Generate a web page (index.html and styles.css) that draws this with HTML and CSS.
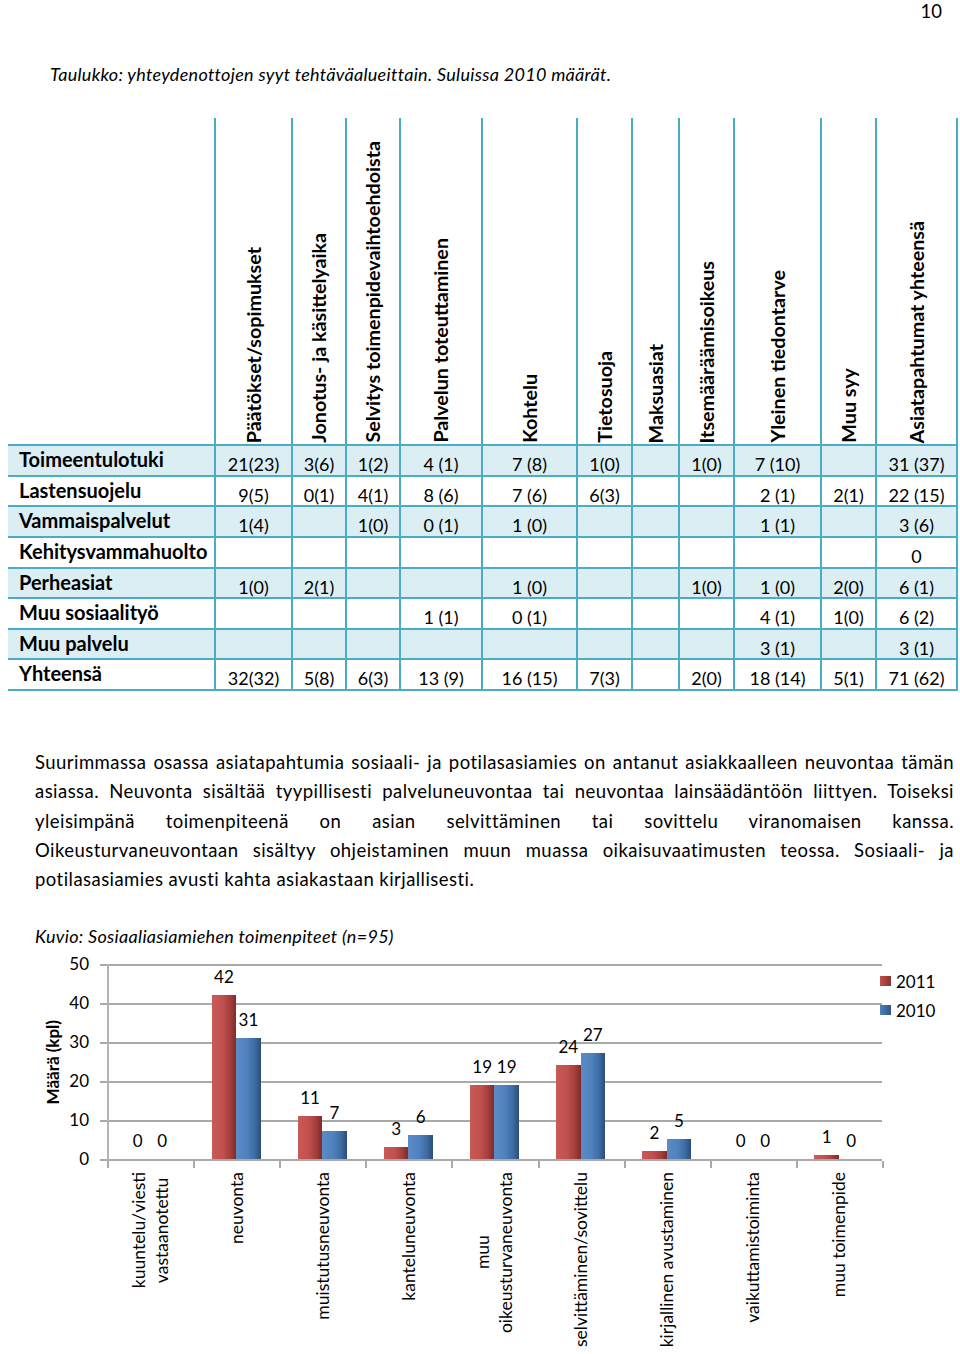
FILE: index.html
```html
<!DOCTYPE html>
<html lang="fi">
<head>
<meta charset="utf-8">
<title>Sivu 10</title>
<link rel="stylesheet" href="styles.css">
</head>
<body>
<div class="page">
  <div class="pagenum">10</div>
  <p class="caption">Taulukko: yhteydenottojen syyt tehtäväalueittain. Suluissa 2010 määrät.</p>

  <table class="stats">
    <colgroup>
      <col class="c0"><col class="c1"><col class="c2"><col class="c3"><col class="c4"><col class="c5">
      <col class="c6"><col class="c7"><col class="c8"><col class="c9"><col class="c10"><col class="c11">
    </colgroup>
    <thead>
      <tr>
        <th class="corner"></th>
        <th><span class="vh">Päätökset/sopimukset</span></th>
        <th><span class="vh">Jonotus- ja käsittelyaika</span></th>
        <th><span class="vh">Selvitys toimenpidevaihtoehdoista</span></th>
        <th><span class="vh">Palvelun toteuttaminen</span></th>
        <th><span class="vh">Kohtelu</span></th>
        <th><span class="vh">Tietosuoja</span></th>
        <th><span class="vh">Maksuasiat</span></th>
        <th><span class="vh">Itsemääräämisoikeus</span></th>
        <th><span class="vh">Yleinen tiedontarve</span></th>
        <th><span class="vh">Muu syy</span></th>
        <th><span class="vh">Asiatapahtumat yhteensä</span></th>
      </tr>
    </thead>
    <tbody>
      <tr><th>Toimeentulotuki</th><td>21(23)</td><td>3(6)</td><td>1(2)</td><td>4 (1)</td><td>7 (8)</td><td>1(0)</td><td></td><td>1(0)</td><td>7 (10)</td><td></td><td>31 (37)</td></tr>
      <tr><th>Lastensuojelu</th><td>9(5)</td><td>0(1)</td><td>4(1)</td><td>8 (6)</td><td>7 (6)</td><td>6(3)</td><td></td><td></td><td>2 (1)</td><td>2(1)</td><td>22 (15)</td></tr>
      <tr><th>Vammaispalvelut</th><td>1(4)</td><td></td><td>1(0)</td><td>0 (1)</td><td>1 (0)</td><td></td><td></td><td></td><td>1 (1)</td><td></td><td>3 (6)</td></tr>
      <tr><th>Kehitysvammahuolto</th><td></td><td></td><td></td><td></td><td></td><td></td><td></td><td></td><td></td><td></td><td>0</td></tr>
      <tr><th>Perheasiat</th><td>1(0)</td><td>2(1)</td><td></td><td></td><td>1 (0)</td><td></td><td></td><td>1(0)</td><td>1 (0)</td><td>2(0)</td><td>6 (1)</td></tr>
      <tr><th>Muu sosiaalityö</th><td></td><td></td><td></td><td>1 (1)</td><td>0 (1)</td><td></td><td></td><td></td><td>4 (1)</td><td>1(0)</td><td>6 (2)</td></tr>
      <tr><th>Muu palvelu</th><td></td><td></td><td></td><td></td><td></td><td></td><td></td><td></td><td>3 (1)</td><td></td><td>3 (1)</td></tr>
      <tr><th>Yhteensä</th><td>32(32)</td><td>5(8)</td><td>6(3)</td><td>13 (9)</td><td>16 (15)</td><td>7(3)</td><td></td><td>2(0)</td><td>18 (14)</td><td>5(1)</td><td>71 (62)</td></tr>
    </tbody>
  </table>

  <p class="text">
    <span class="jl">Suurimmassa osassa asiatapahtumia sosiaali- ja potilasasiamies on antanut asiakkaalleen neuvontaa tämän</span>
    <span class="jl">asiassa. Neuvonta sisältää tyypillisesti palveluneuvontaa tai neuvontaa lainsäädäntöön liittyen. Toiseksi</span>
    <span class="jl">yleisimpänä toimenpiteenä on asian selvittäminen tai sovittelu viranomaisen kanssa.</span>
    <span class="jl">Oikeusturvaneuvontaan sisältyy ohjeistaminen muun muassa oikaisuvaatimusten teossa. Sosiaali- ja</span>
    <span class="ll">potilasasiamies avusti kahta asiakastaan kirjallisesti.</span>
  </p>

  <p class="caption fig">Kuvio: Sosiaaliasiamiehen toimenpiteet (n=95)</p>

  <div class="chart">
    <div class="ytitle"><span>Määrä (kpl)</span></div>
    <div class="yticks"><span>50</span><span>40</span><span>30</span><span>20</span><span>10</span><span>0</span></div>
    <div class="plot">
      <div class="cat">
        <div class="bc"><span class="val">0</span><div class="bar red" style="height:0px"></div></div>
        <div class="bc"><span class="val">0</span><div class="bar blue" style="height:0px"></div></div>
      </div>
      <div class="cat">
        <div class="bc"><span class="val">42</span><div class="bar red" style="height:163.8px"></div></div>
        <div class="bc"><span class="val">31</span><div class="bar blue" style="height:120.9px"></div></div>
      </div>
      <div class="cat">
        <div class="bc"><span class="val">11</span><div class="bar red" style="height:42.9px"></div></div>
        <div class="bc"><span class="val">7</span><div class="bar blue" style="height:27.3px"></div></div>
      </div>
      <div class="cat">
        <div class="bc"><span class="val">3</span><div class="bar red" style="height:11.7px"></div></div>
        <div class="bc"><span class="val">6</span><div class="bar blue" style="height:23.4px"></div></div>
      </div>
      <div class="cat">
        <div class="bc"><span class="val">19</span><div class="bar red" style="height:74.1px"></div></div>
        <div class="bc"><span class="val">19</span><div class="bar blue" style="height:74.1px"></div></div>
      </div>
      <div class="cat">
        <div class="bc"><span class="val">24</span><div class="bar red" style="height:93.6px"></div></div>
        <div class="bc"><span class="val">27</span><div class="bar blue" style="height:105.3px"></div></div>
      </div>
      <div class="cat">
        <div class="bc"><span class="val">2</span><div class="bar red" style="height:7.8px"></div></div>
        <div class="bc"><span class="val">5</span><div class="bar blue" style="height:19.5px"></div></div>
      </div>
      <div class="cat">
        <div class="bc"><span class="val">0</span><div class="bar red" style="height:0px"></div></div>
        <div class="bc"><span class="val">0</span><div class="bar blue" style="height:0px"></div></div>
      </div>
      <div class="cat">
        <div class="bc"><span class="val">1</span><div class="bar red" style="height:3.9px"></div></div>
        <div class="bc"><span class="val">0</span><div class="bar blue" style="height:0px"></div></div>
      </div>
    </div>
    <div class="legend">
      <div class="li"><i class="sw red"></i><span>2011</span></div>
      <div class="li"><i class="sw blue"></i><span>2010</span></div>
    </div>
    <div class="xlabels">
      <div class="xl"><span>kuuntelu/viesti<br>vastaanotettu</span></div>
      <div class="xl"><span>neuvonta</span></div>
      <div class="xl"><span>muistutusneuvonta</span></div>
      <div class="xl"><span>kanteluneuvonta</span></div>
      <div class="xl"><span>muu<br>oikeusturvaneuvonta</span></div>
      <div class="xl"><span>selvittäminen/sovittelu</span></div>
      <div class="xl"><span>kirjallinen avustaminen</span></div>
      <div class="xl"><span>vaikuttamistoiminta</span></div>
      <div class="xl"><span>muu toimenpide</span></div>
    </div>
  </div>
</div>
</body>
</html>
```

FILE: styles.css
```css
* { box-sizing: border-box; }

body {
  margin: 0;
  background: #ffffff;
  color: #000000;
  font-family: Lato, "Open Sans", "DejaVu Sans", sans-serif;
}

.page {
  width: 960px;
  height: 1354px;
  overflow: hidden;
}

.pagenum {
  text-align: right;
  padding: 0 18px 0 0;
  font-size: 18.5px;
  line-height: 22.2px;
  height: 19px;
}

.caption {
  margin: 44px 0 0 50px;
  font-style: italic;
  font-size: 18px;
  letter-spacing: 0.3px;
  line-height: 22px;
}

/* ---------- table ---------- */
.stats {
  margin: 33px 0 0 8px;
  border-collapse: collapse;
  table-layout: fixed;
  width: 949px;
}
.c0 { width: 207px; }
.c1 { width: 77px; }
.c2 { width: 54px; }
.c3 { width: 54px; }
.c4 { width: 82px; }
.c5 { width: 95px; }
.c6 { width: 55px; }
.c7 { width: 47px; }
.c8 { width: 55px; }
.c9 { width: 87px; }
.c10 { width: 55px; }
.c11 { width: 81px; }

.stats th,
.stats td {
  border: 2px solid #4bacc6;
  padding: 0;
}

.stats thead th {
  border-top: none;
  height: 327px;
  vertical-align: bottom;
  text-align: center;
  font-size: 0;
  padding-bottom: 1px;
}
.stats thead th.corner { border-left: none; }

.vh {
  display: inline-block;
  vertical-align: bottom;
  writing-mode: vertical-rl;
  transform: rotate(180deg);
  white-space: nowrap;
  font-weight: 700;
  font-size: 19.7px;
  line-height: 20px;
}

.stats tbody tr:nth-child(odd) { background: #daeef3; }

.stats tbody th {
  border-left: none;
  text-align: left;
  vertical-align: top;
  padding: 3px 0 0 11px;
  font-size: 20px;
  line-height: 20px;
  font-weight: 700;
  height: 30.625px;
  white-space: nowrap;
}

.stats tbody td {
  text-align: center;
  vertical-align: top;
  padding-top: 8px;
  font-size: 18px;
  line-height: 20px;
  height: 30.625px;
  white-space: nowrap;
}

/* ---------- text ---------- */
.text {
  margin: 57px 6px 0 35px;
  font-size: 18.5px;
  letter-spacing: 0.45px;
  line-height: 29.33px;
}
.text span { display: block; }
.text .jl { text-align: justify; text-align-last: justify; }
.text .ll { text-align: left; }

.fig { margin: 30px 0 0 35px; }

/* ---------- chart ---------- */
.chart {
  margin-top: 17px;
  padding-left: 40px;
  display: grid;
  grid-template-columns: 26px 41px 775px 78px;
  grid-template-rows: 197px auto;
}

.ytitle {
  grid-column: 1;
  grid-row: 1;
  display: flex;
  justify-content: center;
  align-items: center;
}
.ytitle span {
  writing-mode: vertical-rl;
  transform: rotate(180deg);
  font-weight: 700;
  font-size: 17px;
  line-height: 20px;
  white-space: nowrap;
}

.yticks {
  grid-column: 2;
  grid-row: 1;
  align-self: start;
  margin-top: -10px;
  height: 215px;
  padding-right: 18px;
  display: flex;
  flex-direction: column;
  justify-content: space-between;
  align-items: flex-end;
  font-size: 17px;
  line-height: 20px;
}

.plot {
  grid-column: 3;
  grid-row: 1;
  margin-left: -7px;
  padding: 0 0 2px 7px;
  height: 197px;
  display: flex;
  background-image:
    linear-gradient(to right, transparent 7px, #b3b3b3 7px, #b3b3b3 9px, transparent 9px),
    repeating-linear-gradient(to bottom, #a9a9a9 0, #a9a9a9 2px, transparent 2px, transparent 39px);
}

.cat {
  flex: 1;
  display: flex;
  justify-content: center;
  align-items: flex-end;
}
.bc {
  width: 24.5px;
  display: flex;
  flex-direction: column;
  align-items: center;
}
.val {
  font-size: 17px;
  line-height: 20px;
  margin-bottom: 8px;
  white-space: nowrap;
}
.bar { width: 100%; }
.bar.red {
  background: linear-gradient(to right, #c85a57 0%, #c0504d 45%, #a43f3c 75%, #7e2b29 100%);
}
.bar.blue {
  background: linear-gradient(to right, #5b8cc6 0%, #4f81bd 45%, #3f6ca3 75%, #2b4d78 100%);
}

.legend {
  grid-column: 4;
  grid-row: 1;
  margin-left: -2px;
  padding-top: 3px;
  font-size: 17px;
  line-height: 29px;
}
.li {
  display: flex;
  align-items: center;
  gap: 5px;
}
.sw {
  display: block;
  width: 11px;
  height: 10px;
}
.sw.red { background: linear-gradient(to right, #c0504d, #8b3331); }
.sw.blue { background: linear-gradient(to right, #4f81bd, #2e5587); }

.xlabels {
  grid-column: 3;
  grid-row: 2;
  width: 777px;
  padding: 11px 2px 0 0;
  display: flex;
  background-image: repeating-linear-gradient(to right, #a9a9a9 0, #a9a9a9 2px, transparent 2px, transparent 86.111px);
  background-size: 100% 7px;
  background-repeat: no-repeat;
}
.xl {
  flex: 1;
  display: flex;
  justify-content: center;
  align-items: flex-start;
}
.xl span {
  writing-mode: vertical-rl;
  transform: rotate(180deg);
  text-align: center;
  font-size: 17.5px;
  line-height: 23px;
  white-space: nowrap;
}
```
